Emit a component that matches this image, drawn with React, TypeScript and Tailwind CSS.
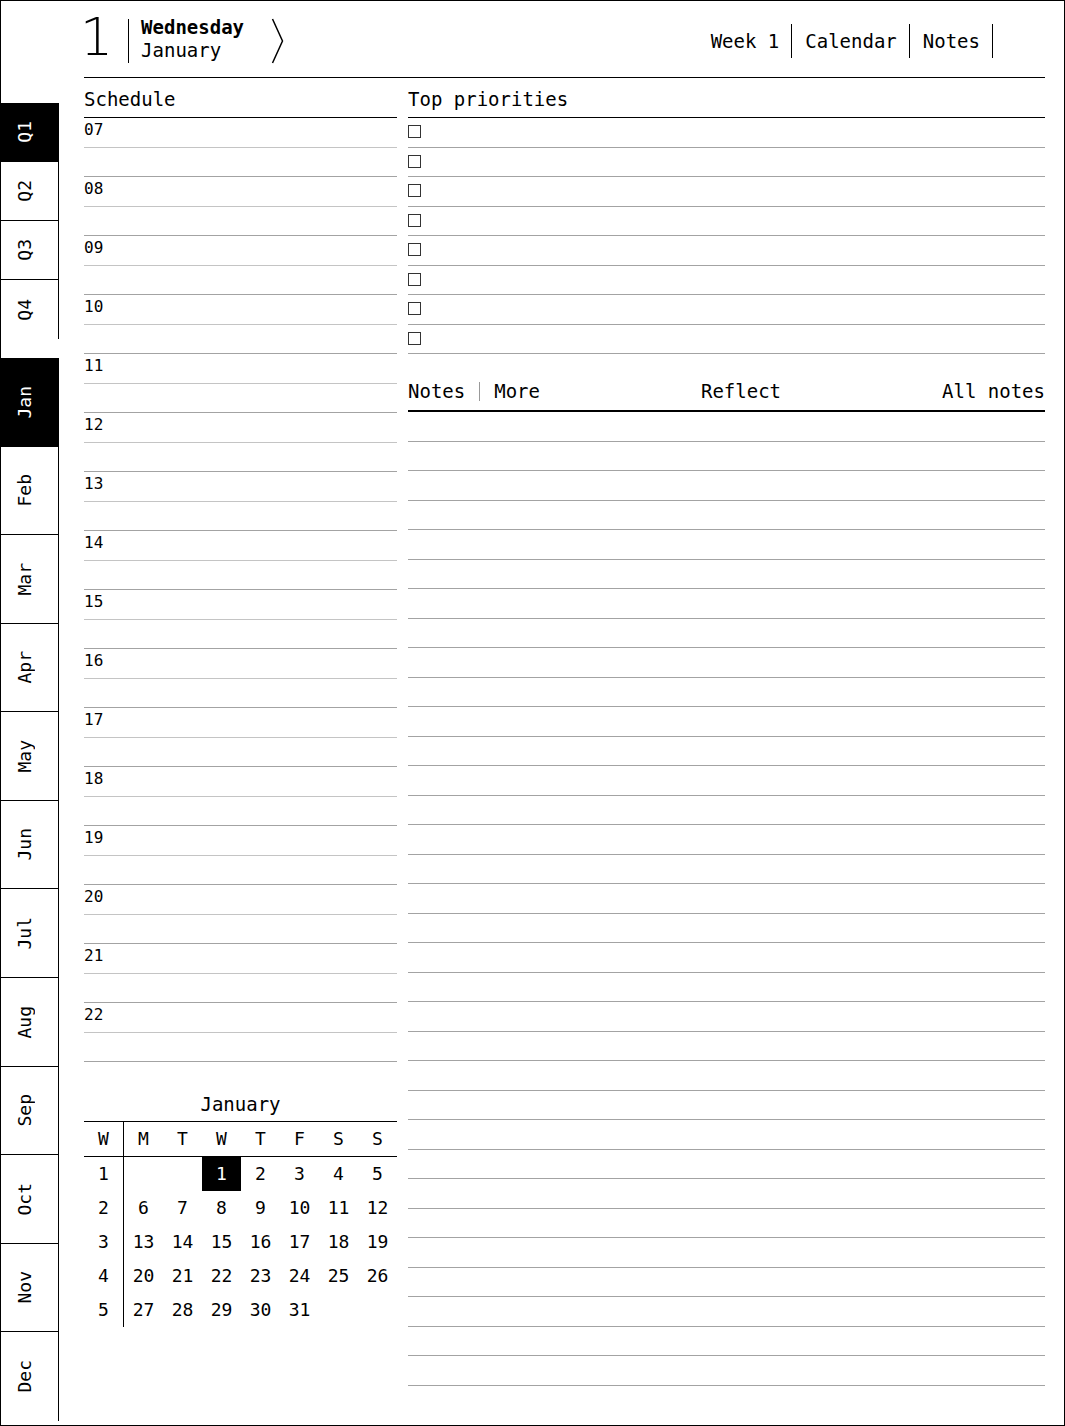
const hours = ["07", "08", "09", "10", "11", "12", "13", "14", "15", "16", "17", "18", "19", "20", "21", "22"];
const quarters = ["Q1", "Q2", "Q3", "Q4"];
const months = ["Jan", "Feb", "Mar", "Apr", "May", "Jun", "Jul", "Aug", "Sep", "Oct", "Nov", "Dec"];
const weekdays = ["M", "T", "W", "T", "F", "S", "S"];
const weeks: (number | null)[][] = [
  [null, null, 1, 2, 3, 4, 5],
  [6, 7, 8, 9, 10, 11, 12],
  [13, 14, 15, 16, 17, 18, 19],
  [20, 21, 22, 23, 24, 25, 26],
  [27, 28, 29, 30, 31, null, null],
];

function Chevron() {
  return (
    <svg width="14" height="46" viewBox="0 0 14 46" className="mt-[17px] ml-[27px]">
      <path d="M1.5 1 L11.5 23 L1.5 45" fill="none" stroke="#000" strokeWidth="1.5" />
    </svg>
  );
}

function SideTab({ label, active, height, last }: { label: string; active?: boolean; height: string; last?: boolean }) {
  return (
    <div
      className={`${height} flex items-center justify-center pr-[10px] border-r border-black ${last ? "" : "border-b"} ${
        active ? "bg-black text-white" : "bg-white text-black"
      }`}
    >
      <span className="text-[18px] leading-[21px] [writing-mode:vertical-rl] rotate-180">{label}</span>
    </div>
  );
}

function MiniCalendar() {
  return (
    <div>
      <div className="h-[60px] flex items-end justify-center pb-[5px] border-b border-black text-[19px] leading-[24px]">
        January
      </div>
      <div className="grid grid-cols-[40px_repeat(7,1fr)] text-[18px] leading-[22px]">
        <div className="h-[35px] flex items-center justify-center border-r border-b border-black">W</div>
        {weekdays.map((d, i) => (
          <div key={i} className="h-[35px] flex items-center justify-center border-b border-black">
            {d}
          </div>
        ))}
        {weeks.map((week, wi) => (
          <div key={wi} className="contents">
            <div className="h-[34px] flex items-center justify-center border-r border-black">{wi + 1}</div>
            {week.map((day, di) => (
              <div
                key={di}
                className={`h-[34px] flex items-center justify-center ${day === 1 ? "bg-black text-white" : ""}`}
              >
                {day ?? ""}
              </div>
            ))}
          </div>
        ))}
      </div>
    </div>
  );
}

export default function App() {
  return (
    <div className="w-[1065px] h-[1426px] border border-black bg-white text-black flex font-['DejaVu_Sans_Mono',monospace]">
      <aside className="w-[58px] shrink-0 flex flex-col">
        <div className="h-[102px]" />
        {quarters.map((q, i) => (
          <SideTab key={q} label={q} active={i === 0} height="h-[59px]" last={i === 3} />
        ))}
        <div className="h-[19px]" />
        {months.map((m, i) => (
          <SideTab key={m} label={m} active={i === 0} height="h-[88.58px]" last={i === 11} />
        ))}
      </aside>

      <main className="flex-1 pl-[25px] pr-[19px]">
        <header className="h-[77px] border-b border-black flex items-start justify-between">
          <div className="flex items-start">
            <span className="mt-[10px] -ml-[4px] text-[52px] leading-[52px] font-light font-['DejaVu_Sans',sans-serif]">
              1
            </span>
            <span className="mt-[18px] ml-[15px] w-px h-[44px] bg-black" />
            <div className="mt-[15px] ml-[12px] text-[19px] leading-[23px]">
              <div className="font-bold">Wednesday</div>
              <div>January</div>
            </div>
            <Chevron />
          </div>
          <nav className="mt-[23px] mr-[52px] flex text-[19px] leading-[24px]">
            {["Week 1", "Calendar", "Notes"].map((item) => (
              <span key={item} className="h-[34px] flex items-center pl-[13px] pr-[12px] border-r border-black">
                {item}
              </span>
            ))}
          </nav>
        </header>

        <div className="flex gap-[11px]">
          <section className="w-[313px] shrink-0">
            <div className="h-[40px] flex items-end pb-[6px] border-b border-black text-[19px] leading-[24px]">
              Schedule
            </div>
            {hours.map((h) => (
              <div key={h}>
                <div className="h-[29.5px] border-b border-[#c4c4c4] pt-[2px] text-[16px] leading-[20px]">{h}</div>
                <div className="h-[29.5px] border-b border-[#a3a3a3]" />
              </div>
            ))}
            <MiniCalendar />
          </section>

          <section className="flex-1">
            <div className="h-[40px] flex items-end pb-[6px] border-b border-black text-[19px] leading-[24px]">
              Top priorities
            </div>
            {Array.from({ length: 8 }).map((_, i) => (
              <div key={i} className="h-[29.5px] pt-[7px] border-b border-[#a3a3a3]">
                <div className="w-[13px] h-[13px] border border-[#333]" />
              </div>
            ))}
            <div className="h-[58px] flex items-end justify-between pb-[7px] border-b-2 border-black text-[19px] leading-[24px]">
              <div className="flex items-center">
                <span>Notes</span>
                <span className="mx-[14px] w-px h-[19px] bg-[#999]" />
                <span>More</span>
              </div>
              <span>Reflect</span>
              <span>All notes</span>
            </div>
            {Array.from({ length: 33 }).map((_, i) => (
              <div key={i} className="h-[29.5px] border-b border-[#a3a3a3]" />
            ))}
          </section>
        </div>
      </main>
    </div>
  );
}
